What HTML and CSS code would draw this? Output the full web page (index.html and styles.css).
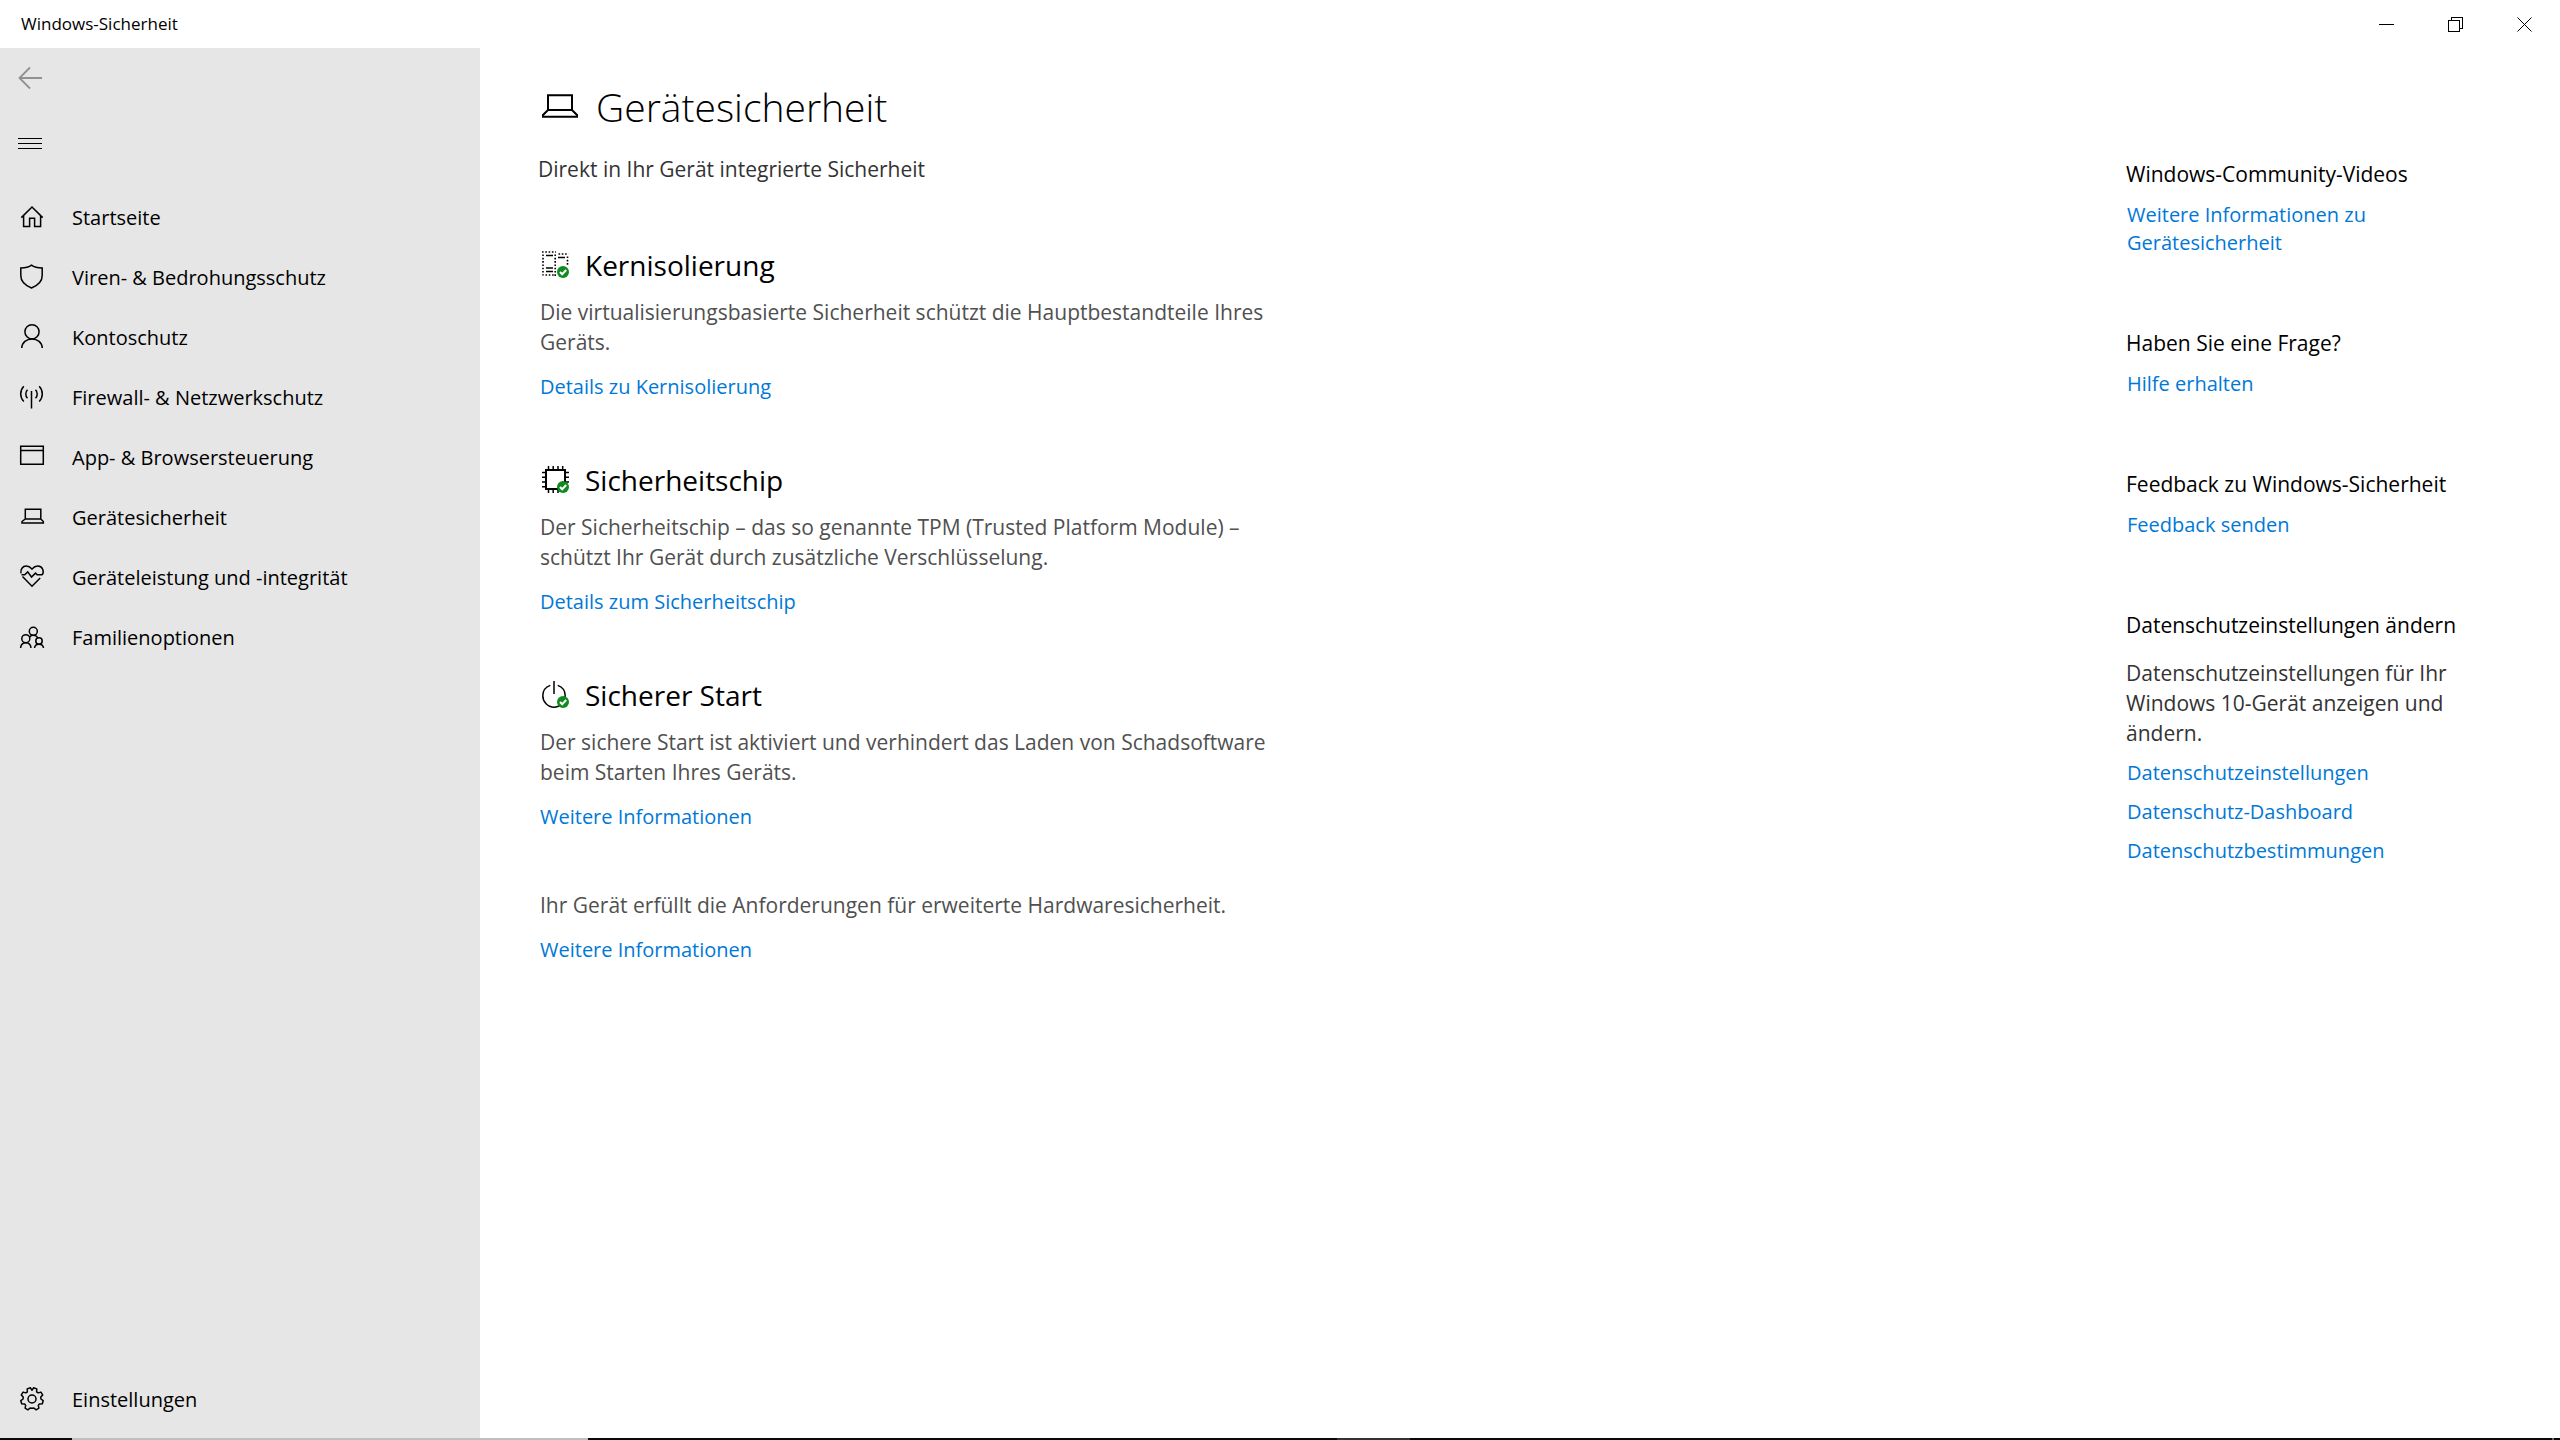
FILE: index.html
```html
<!DOCTYPE html>
<html lang="de">
<head>
<meta charset="utf-8">
<meta name="viewport" content="width=device-width, initial-scale=1">
<title>Windows-Sicherheit</title>
<link rel="stylesheet" href="styles.css">
</head>
<body>
<header class="titlebar">
  <span class="titlebar-name">Windows-Sicherheit</span>
  <div class="window-controls">
    <button class="window-button" type="button" aria-label="Minimieren">
      <svg width="15" height="15" viewBox="0 0 15 15" shape-rendering="crispEdges"><path d="M0 7.5h15"/></svg>
    </button>
    <button class="window-button" type="button" aria-label="Verkleinern">
      <svg width="15" height="15" viewBox="0 0 15 15" shape-rendering="crispEdges"><path d="M.5 3.5h11v11H.5zM3.5 3.5v-3h11v11h-3"/></svg>
    </button>
    <button class="window-button" type="button" aria-label="Schließen">
      <svg width="15" height="15" viewBox="0 0 15 15"><path d="M.5.5l14 14M14.5.5l-14 14"/></svg>
    </button>
  </div>
</header>

<div class="app">
  <nav class="sidebar" aria-label="Navigation">
    <button class="icon-button back" type="button" aria-label="Zurück" disabled>
      <svg width="24" height="24" viewBox="0 0 24 24"><path d="M24 12H1.5M12 1.5L1.5 12 12 22.5" stroke-width="1.8"/></svg>
    </button>
    <button class="icon-button menu" type="button" aria-label="Menü">
      <svg width="24" height="12" viewBox="0 0 24 12" shape-rendering="crispEdges"><path d="M0 .5h24M0 5.5h24M0 10.5h24" stroke-width="1"/></svg>
    </button>
    <ul class="nav-list">
      <li><a class="nav-link" href="#start">
        <svg class="nav-icon" viewBox="0 0 24 24"><path d="M1.3 12.6L12 2l10.7 10.6M3.6 10.6v10.8h6v-8.2h5v8.2h6V10.6"/></svg>
        <span>Startseite</span></a></li>
      <li><a class="nav-link" href="#viren">
        <svg class="nav-icon" viewBox="0 0 24 24"><path d="M11.5.2C8.8 2.3 4.6 3 .8 3v7.5c0 5.800 4.500 10 10.700 12.500 6.200-2.500 10.700-6.700 10.700-12.500V3C18.400 3 14.200 2.300 11.500.2z"/></svg>
        <span>Viren- &amp; Bedrohungsschutz</span></a></li>
      <li><a class="nav-link" href="#konto">
        <svg class="nav-icon" viewBox="0 0 24 24"><circle cx="12" cy="6.800" r="7.100"/><path d="M1.700 23C2 17.500 6.500 13.900 12 13.900S22 17.500 22.300 23"/></svg>
        <span>Kontoschutz</span></a></li>
      <li><a class="nav-link" href="#firewall">
        <svg class="nav-icon" viewBox="0 0 24 24"><path d="M11.500 6v17.500M7.500 4.800c-2.300 2.200-2.300 6.200 0 8.400M15.500 4.800c2.300 2.200 2.300 6.200 0 8.400M3.800 1.300c-4.100 4.300-4.100 11 0 15.200M19.200 1.300c4.100 4.300 4.100 11 0 15.200"/></svg>
        <span>Firewall- &amp; Netzwerkschutz</span></a></li>
      <li><a class="nav-link" href="#app">
        <svg class="nav-icon" viewBox="0 0 24 24"><path d="M.7 1.200h22.600v18H.7zM.7 5.600h22.600"/></svg>
        <span>App- &amp; Browsersteuerung</span></a></li>
      <li><a class="nav-link" href="#geraet" aria-current="page">
        <svg class="nav-icon" viewBox="0 0 24 24"><path d="M5.300 14V4.200h15.500V14M5.300 14h15.500l2.500 2.500V18H2v-1.500z"/></svg>
        <span>Gerätesicherheit</span></a></li>
      <li><a class="nav-link" href="#leistung">
        <svg class="nav-icon" viewBox="0 0 24 24"><path d="M1 8.300C.2 4.500 2.600 1.100 6.300 1.100 9 1.100 10.600 2.500 12 4.100c1.400-1.600 3-3 5.700-3 4.500 0 7 4.900 4.500 8.700M1.500 9.700h3.200l3-2.800 3.800 5.100 4-3.900 1.700 1.700h5.200M2.500 11.600L12 21.300l8.200-8.400"/></svg>
        <span>Geräteleistung und -integrität</span></a></li>
      <li><a class="nav-link" href="#familie">
        <svg class="nav-icon" viewBox="0 0 24 24"><circle cx="13.300" cy="6.300" r="4"/><circle cx="5.800" cy="13.700" r="4"/><circle cx="19" cy="16" r="3.200"/><path d="M.6 23c.3-3.400 2.300-5.300 5.200-5.300s4.900 1.900 5.200 5.300M14.500 23c.3-2.500 2-3.800 4.500-3.800s4.200 1.300 4.500 3.800M9.800 12c.8-1.300 2-1.800 3.500-1.800 2.200 0 3.500.9 4.500 2.600"/></svg>
        <span>Familienoptionen</span></a></li>
    </ul>
    <a class="nav-link settings" href="#einstellungen">
      <svg class="nav-icon" viewBox="0 0 24 24"><circle cx="12" cy="12" r="4"/><path d="M12 3.200L13.700.8L16.800 1.900L16.600 4.800L18.100 5.900L20.900 5.100L22.700 7.900L20.800 10.100L20.900 12L23.200 13.700L22.300 16.800L19.400 17L18.300 18.400L18.900 21.200L16.100 22.800L13.900 21L12 21.300L10.100 21L7.900 22.800L5.100 21.200L5.700 18.400L4.600 17L1.700 16.800L.8 13.700L3.100 12L3.200 10.100L1.300 7.900L3.100 5.100L5.900 5.900L7.400 4.800L7.200 1.900L10.300.8z" stroke-linejoin="round"/></svg>
      <span>Einstellungen</span></a>
  </nav>

  <main class="content">
    <div class="primary">
      <div class="page-head">
        <h1 class="page-title">
          <svg class="page-icon" viewBox="0 0 36 28"><path d="M6 17V2.200h24V17M6 17h24l5 5v1.800H1V22z"/></svg>
          Gerätesicherheit</h1>
        <p class="page-lead">Direkt in Ihr Gerät integrierte Sicherheit</p>
      </div>

      <section class="section">
        <h2 class="section-title">
          <svg class="section-icon" viewBox="0 0 28 28">
            <path stroke-width="1.600" stroke-dasharray="1.600 1.700" d="M0 1h14M1 3.500v21M13.200 3.500v23M3.500 24h9M16.500 3h10M25.500 5.500v10"/>
            <path stroke-width="1.700" d="M4 4.500h7M16 6.500h7M4 17h7M4 20.500h7"/>
            <circle class="badge" cx="21" cy="21" r="6"/><path class="badge-check" d="M18 21l2.200 2.200 4-4.200"/>
          </svg>
          Kernisolierung</h2>
        <p class="section-text">Die virtualisierungsbasierte Sicherheit schützt die Hauptbestandteile Ihres Geräts.</p>
        <a class="link" href="#kern">Details zu Kernisolierung</a>
      </section>

      <section class="section">
        <h2 class="section-title">
          <svg class="section-icon" viewBox="0 0 28 28">
            <path stroke-width="2" d="M4 4h19v19H4z"/>
            <path stroke-width="1.500" d="M6.500 0v4M11.200 0v4M16 0v4M20.700 0v4M6.500 23v4M11.200 23v4M16 23v4M0 6.500h4M0 11.200h4M0 16h4M0 20.700h4M23 6.500h4M23 11.200h4M23 16h4"/>
            <circle class="badge" cx="21" cy="21" r="6"/><path class="badge-check" d="M18 21l2.200 2.200 4-4.200"/>
          </svg>
          Sicherheitschip</h2>
        <p class="section-text">Der Sicherheitschip – das so genannte TPM (Trusted Platform Module) – schützt Ihr Gerät durch zusätzliche Verschlüsselung.</p>
        <a class="link" href="#chip">Details zum Sicherheitschip</a>
      </section>

      <section class="section">
        <h2 class="section-title">
          <svg class="section-icon" viewBox="0 0 28 28">
            <path stroke-width="1.500" d="M12 0v13M8.300 4.400C3.800 6 .8 10 .8 14.700.8 21 5.800 26.200 12 26.200S23.200 21 23.200 14.700C23.200 10 20.200 6 15.700 4.400"/>
            <circle class="badge" cx="21" cy="21" r="6"/><path class="badge-check" d="M18 21l2.200 2.200 4-4.200"/>
          </svg>
          Sicherer Start</h2>
        <p class="section-text">Der sichere Start ist aktiviert und verhindert das Laden von Schadsoftware beim Starten Ihres Geräts.</p>
        <a class="link" href="#start-info">Weitere Informationen</a>
      </section>

      <section class="section">
        <p class="section-text">Ihr Gerät erfüllt die Anforderungen für erweiterte Hardwaresicherheit.</p>
        <a class="link" href="#hardware">Weitere Informationen</a>
      </section>
    </div>

    <aside class="aside">
      <section class="aside-group">
        <h3 class="aside-title">Windows-Community-Videos</h3>
        <a class="link" href="#videos">Weitere Informationen zu Gerätesicherheit</a>
      </section>
      <section class="aside-group">
        <h3 class="aside-title">Haben Sie eine Frage?</h3>
        <a class="link" href="#hilfe">Hilfe erhalten</a>
      </section>
      <section class="aside-group">
        <h3 class="aside-title">Feedback zu Windows-Sicherheit</h3>
        <a class="link" href="#feedback">Feedback senden</a>
      </section>
      <section class="aside-group">
        <h3 class="aside-title">Datenschutzeinstellungen ändern</h3>
        <p class="aside-text">Datenschutzeinstellungen für Ihr Windows 10-Gerät anzeigen und ändern.</p>
        <a class="link" href="#ds-einstellungen">Datenschutzeinstellungen</a>
        <a class="link" href="#ds-dashboard">Datenschutz-Dashboard</a>
        <a class="link" href="#ds-bestimmungen">Datenschutzbestimmungen</a>
      </section>
    </aside>
  </main>
</div>

<div class="taskbar-edge" aria-hidden="true">
  <span class="edge-start"></span><span class="edge-search"></span><span class="edge-pinned"></span><span class="edge-active"></span><span class="edge-tray"></span><span class="edge-peek"></span><span class="edge-end"></span>
</div>
</body>
</html>
```
FILE: styles.css
```css
* {
  box-sizing: border-box;
}

body {
  margin: 0;
  min-height: 100vh;
  display: flex;
  flex-direction: column;
  background: #fff;
  color: #000;
  font-family: "Open Sans", "Noto Sans", sans-serif;
  font-size: 20px;
  line-height: 28px;
}

h1, h2, h3, p, ul {
  margin: 0;
  padding: 0;
  font-weight: 400;
}

svg {
  display: block;
  flex: none;
  overflow: visible;
  fill: none;
  stroke: currentColor;
}

button {
  display: flex;
  align-items: center;
  margin: 0;
  padding: 0;
  border: 0;
  background: none;
  color: inherit;
  font: inherit;
}

a {
  color: inherit;
  text-decoration: none;
}

/* Title bar */
.titlebar {
  display: flex;
  align-items: center;
  justify-content: space-between;
  height: 48px;
  padding: 0 1px 0 21px;
}

.titlebar-name {
  font-size: 17px;
  line-height: 24px;
}

.window-controls {
  display: flex;
}

.window-button {
  justify-content: center;
  width: 69px;
  height: 48px;
}

/* Sidebar */
.app {
  flex: 1;
  display: flex;
}

.sidebar {
  display: flex;
  flex-direction: column;
  flex: none;
  width: 480px;
  padding-bottom: 9px;
  background: #e6e6e6;
}

.icon-button {
  width: 60px;
  height: 60px;
  padding-left: 18px;
}

.back {
  color: #919191;
}

.menu {
  height: 72px;
}

.nav-list {
  margin-bottom: auto;
  padding-top: 7px;
  list-style: none;
}

.nav-link {
  display: flex;
  align-items: center;
  gap: 28px;
  height: 60px;
  padding-left: 20px;
}

.nav-link span {
  padding-top: 2px;
}

.nav-icon {
  width: 24px;
  height: 24px;
  stroke-width: 1.5;
}

/* Page content */
.content {
  flex: 1;
  display: flex;
  justify-content: space-between;
  padding: 0 66px 60px 58px;
}

.page-head {
  padding: 29px 0 61px;
}

.page-title {
  display: flex;
  align-items: center;
  gap: 18px;
  padding-left: 4px;
  font-size: 39px;
  font-weight: 350;
  line-height: 60px;
}

.page-icon {
  width: 36px;
  height: 28px;
  stroke-width: 2;
}

.page-lead {
  margin-top: 17px;
  color: #333;
  font-size: 21px;
  line-height: 30px;
}

.section {
  max-width: 752px;
  margin-bottom: 59px;
  padding-left: 2px;
}

.section-title {
  display: flex;
  align-items: center;
  gap: 15px;
  margin-bottom: 12px;
  padding-left: 2px;
  font-size: 28px;
  line-height: 40px;
}

.section-icon {
  width: 28px;
  height: 28px;
}

.badge {
  fill: #0f8a1f;
  stroke: none;
}

.badge-check {
  stroke: #fff;
  stroke-width: 2;
}

.section-text {
  margin-bottom: 16px;
  color: #505050;
  font-size: 21px;
  line-height: 30px;
}

.link {
  display: block;
  width: fit-content;
  color: #0078d7;
}

/* Help column */
.aside {
  flex: none;
  width: 368px;
  padding-top: 111px;
}

.aside-group {
  display: flex;
  flex-direction: column;
  gap: 11px;
  margin-bottom: 71px;
}

.aside-group .link {
  max-width: 300px;
  padding-left: 1px;
}

.aside-title {
  margin-bottom: 1px;
  font-size: 21px;
  line-height: 30px;
}

.aside-text {
  margin-top: 6px;
  color: #333;
  font-size: 21px;
  line-height: 30px;
}

/* Sliver of the taskbar below the window */
.taskbar-edge {
  display: flex;
  height: 2px;
  background: #0a0809;
}

.edge-start {
  flex: 72;
}

.edge-search {
  flex: 516;
  background: #bfbfbf;
}

.edge-pinned {
  flex: 749;
}

.edge-active {
  flex: 73;
  background: #333;
}

.edge-tray {
  flex: 1142;
}

.edge-peek {
  flex: 2;
  background: #666;
}

.edge-end {
  flex: 6;
}
```
